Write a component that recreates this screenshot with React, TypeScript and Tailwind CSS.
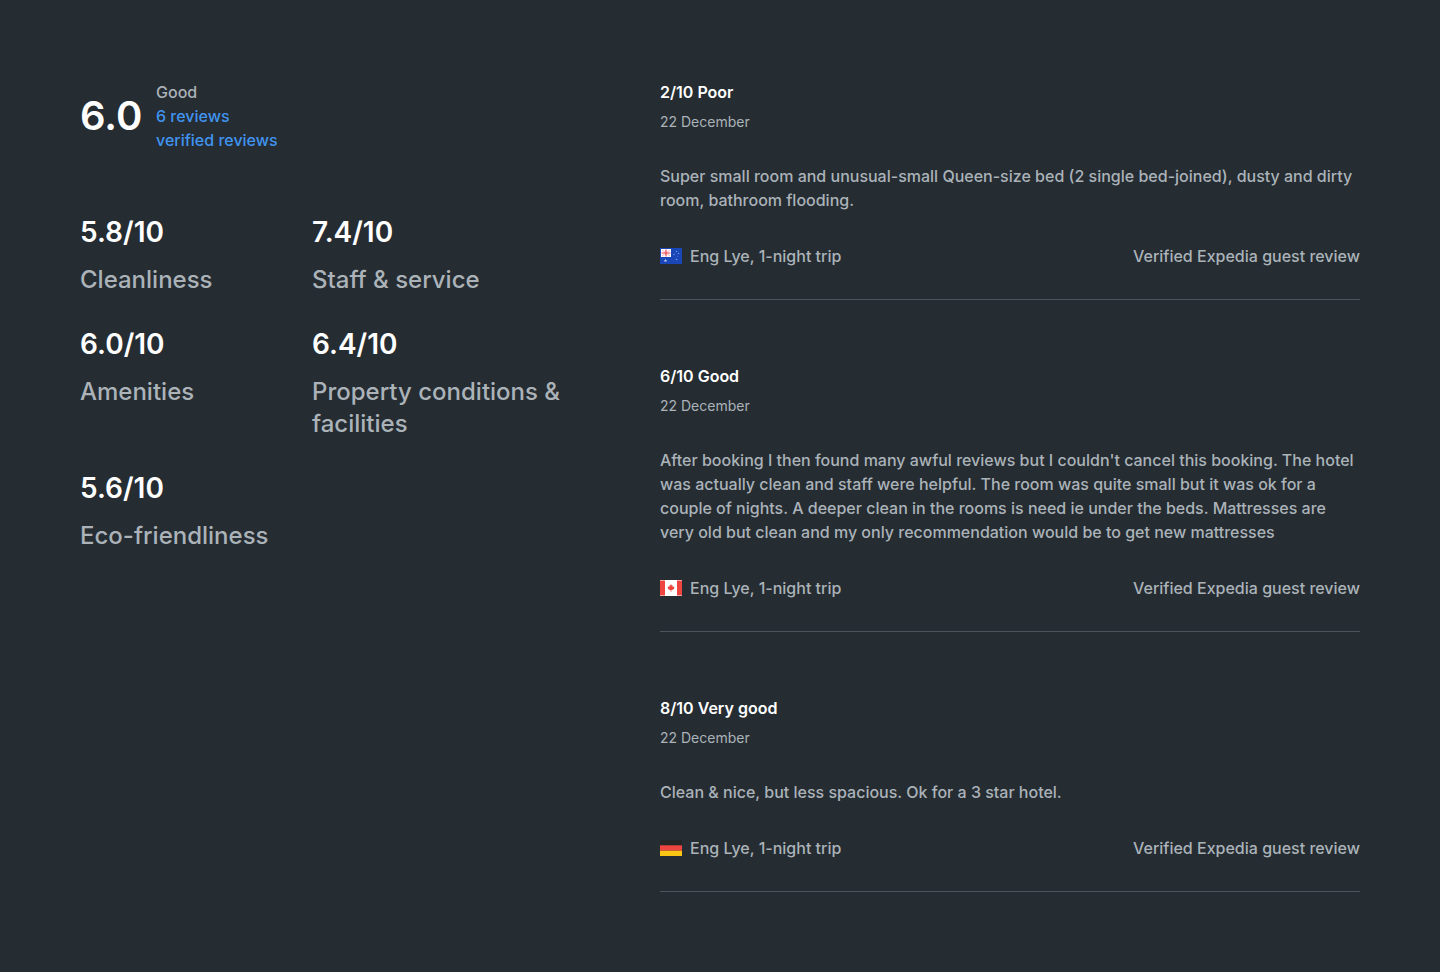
type Review = { title: string; text: string; country: "au" | "ca" | "de" };

const scores = [
  ["5.8/10", "Cleanliness"],
  ["7.4/10", "Staff & service"],
  ["6.0/10", "Amenities"],
  ["6.4/10", "Property conditions & facilities"],
  ["5.6/10", "Eco-friendliness"],
];

const reviews: Review[] = [
  {
    title: "2/10 Poor",
    text: "Super small room and unusual-small Queen-size bed (2 single bed-joined), dusty and dirty room, bathroom flooding.",
    country: "au",
  },
  {
    title: "6/10 Good",
    text: "After booking I then found many awful reviews but I couldn't cancel this booking. The hotel was actually clean and staff were helpful. The room was quite small but it was ok for a couple of nights. A deeper clean in the rooms is need ie under the beds. Mattresses are very old but clean and my only recommendation would be to get new mattresses",
    country: "ca",
  },
  { title: "8/10 Very good", text: "Clean & nice, but less spacious. Ok for a 3 star hotel.", country: "de" },
];

function Flag({ country }: { country: Review["country"] }) {
  return (
    <svg viewBox="0 0 22 16" className="h-4 w-[22px] shrink-0" aria-hidden="true">
      {country === "au" && (
        <>
          <path fill="#1a47b8" d="M0 0h22v16H0z" />
          <path fill="#fff" d="M1 1h10v8H1z" />
          <path stroke="#f0a0a8" strokeWidth=".8" d="M2 2l8 6M10 2L2 8" />
          <path stroke="#ee4550" strokeWidth="1.200" d="M6 1.500v7M1.500 5h9" />
          <g fill="#7d9ae0">
            <path fill="#b5c6f0" d="M5.500 10.800l.5 1.100 1.200.1-.9.800.3 1.200-1.100-.6-1.100.6.3-1.200-.9-.8 1.200-.1z" />
            <circle cx="16.500" cy="3.500" r=".7" />
            <circle cx="14" cy="6.500" r=".7" />
            <circle cx="18.500" cy="5.500" r=".7" />
            <circle cx="16.500" cy="11.500" r=".8" />
            <circle cx="17.500" cy="8.300" r=".4" />
          </g>
        </>
      )}
      {country === "ca" && (
        <>
          <path fill="#fff" d="M0 0h22v16H0z" />
          <path fill="#ee4540" d="M0 .5h5v15H0zM17 .5h5v15h-5z" />
          <path fill="#ee4540" d="M11 4l.8 1.500.8-.3-.2 1.700 1-.8.2.8.9.1-.5 1 .3.600-2 1.300h-.9v1.800h-.8V9.900h-.9l-2-1.300.3-.6-.5-1 .9-.1.2-.8 1 .8-.2-1.700.8.3z" />
        </>
      )}
      {country === "de" && (
        <>
          <path fill="#262626" d="M0 0h22v5.300H0z" />
          <path fill="#ee4540" d="M0 5.300h22v5.400H0z" />
          <path fill="#fbc516" d="M0 10.700h22V16H0z" />
        </>
      )}
    </svg>
  );
}

export default function App() {
  return (
    <main className="flex min-h-screen gap-20 bg-[#252c32] p-20 font-['Inter',sans-serif] text-base font-medium text-[#abb3b9]">
      <section className="w-[500px] shrink-0">
        <div className="flex items-center gap-4">
          <h1 className="w-[60px] text-[40px] leading-12 font-semibold text-white">6.0</h1>
          <div className="flex flex-col">
            <span>Good</span>
            <a href="#reviews" className="text-[#4094f0]">6 reviews</a>
            <a href="#reviews" className="text-[#4094f0]">verified reviews</a>
          </div>
        </div>
        <dl className="mt-14 grid grid-cols-[200px_1fr] gap-x-8 gap-y-6">
          {scores.map(([score, label]) => (
            <div key={label} className="flex flex-col-reverse justify-end gap-2">
              <dt className="text-2xl">{label}</dt>
              <dd className="text-[28px] leading-12 font-semibold text-white">{score}</dd>
            </div>
          ))}
        </dl>
      </section>
      <section id="reviews" className="flex min-w-0 flex-1 flex-col gap-16">
        {reviews.map((review) => (
          <article key={review.title} className="border-b border-[#4b555c] pb-[31px]">
            <h2 className="font-semibold text-white">{review.title}</h2>
            <p className="mt-2 text-sm font-normal">22 December</p>
            <p className="mt-8">{review.text}</p>
            <footer className="mt-8 flex items-center justify-between">
              <span className="flex items-center gap-2">
                <Flag country={review.country} />
                Eng Lye, 1-night trip
              </span>
              <span>Verified Expedia guest review</span>
            </footer>
          </article>
        ))}
      </section>
    </main>
  );
}
